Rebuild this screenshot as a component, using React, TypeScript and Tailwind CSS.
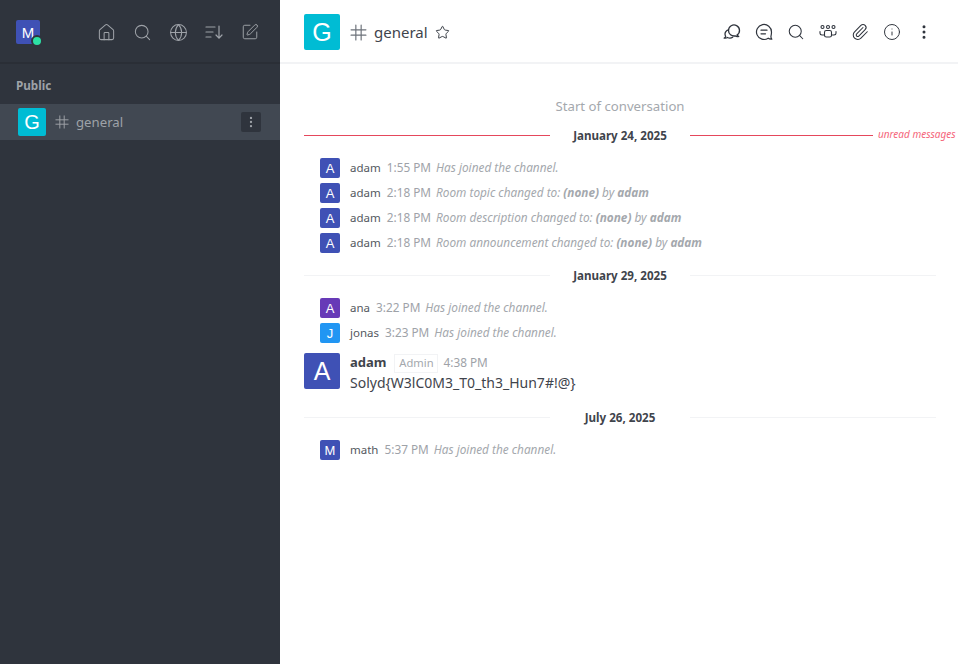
import { ReactNode } from "react"
import { EllipsisVertical, Globe, House, Info, Paperclip, Search, SquarePen, Star } from "lucide-react"

const font = "font-['Noto_Sans',sans-serif]"

function Avatar({ letter, color, size }: { letter: string; color: string; size: "sm" | "xs" | "md" | "lg" }) {
  const sizes = {
    sm: "w-5 h-5 text-[13px] rounded-[2px]",
    xs: "w-6 h-6 text-[15px] rounded-[2px]",
    md: "w-7 h-7 text-[20px] rounded-[2px]",
    lg: "w-9 h-9 text-[25px] rounded-[2px]",
  }
  return (
    <div className={`${sizes[size]} ${color} flex items-center justify-center text-white shrink-0 leading-none font-['Liberation_Sans',sans-serif]`}>
      {letter}
    </div>
  )
}

function HashIcon({ size, className }: { size: number; className?: string }) {
  return (
    <svg width={size} height={size} viewBox="0 0 16 16" fill="none" stroke="currentColor" strokeWidth="1.1" strokeLinecap="round" className={className}>
      <path d="M5.500 1v14M10.500 1v14M1 5.500h14M1 10.500h14" />
    </svg>
  )
}

function SortIcon() {
  return (
    <svg width="20" height="20" viewBox="0 0 20 20" fill="none" stroke="currentColor" strokeWidth="1.2" strokeLinecap="round">
      <path d="M2 5h9M2 10h7M2 15h5M15 4v12M12 13l3 3.200 3-3.200" />
    </svg>
  )
}

function ThreadIcon() {
  return (
    <svg width="20" height="20" viewBox="0 0 20 20" fill="none" stroke="#2f343d" strokeWidth="1.300" strokeLinejoin="round" strokeLinecap="round">
      <path d="M6.500 8.500a5.500 5.500 0 1 1 8.500 4.600c.3.800.9 1.100 1.800 1.200-1.300.5-2.600.3-3.600-.4-3.500.6-6.700-1.700-6.700-5.400Z" />
      <path d="M6.400 7.800c-2 .7-3.400 2.400-3.400 4.300 0 .9.300 1.700.7 2.400-.3.700-.8 1.200-1.500 1.600 1.300.2 2.400 0 3.300-.6 1.700.8 3.700.7 5.200-.3" />
    </svg>
  )
}

function DiscussionIcon() {
  return (
    <svg width="20" height="20" viewBox="0 0 20 20" fill="none" stroke="#2f343d" strokeWidth="1.200" strokeLinecap="round" strokeLinejoin="round">
      <path d="M17.500 10a7.500 7.500 0 1 0-3.300 6.200c.9.700 2.100 1 3.600.9-.7-.8-1-1.800-.8-3 .3-1.300.5-2.800.5-4.100Z" />
      <path d="M7 8.200h6M7 11.800h4.500" />
    </svg>
  )
}

function TeamIcon() {
  return (
    <svg width="20" height="20" viewBox="0 0 20 20" fill="none" stroke="#2f343d" strokeWidth="1.100" strokeLinecap="round" strokeLinejoin="round">
      <circle cx="4.500" cy="5" r="1.500" />
      <circle cx="10" cy="5" r="1.500" />
      <circle cx="15.500" cy="5" r="1.500" />
      <rect x="6.500" y="8.500" width="7" height="6.500" rx="1.800" />
      <path d="M6.500 13H4c-1 0-2-.5-2-1.700V9.500M13.500 13H16c1 0 2-.5 2-1.700V9.500" />
    </svg>
  )
}

function ToolButton({ children }: { children: ReactNode }) {
  return <div className="w-5 h-5 flex items-center justify-center text-[#2f343d]">{children}</div>
}

function SideButton({ children }: { children: ReactNode }) {
  return <div className="w-5 h-5 flex items-center justify-center text-[#9ea2a8]">{children}</div>
}

function DateDivider({ label, unread }: { label: string; unread?: boolean }) {
  const line = unread ? "bg-[#e5475c]" : "bg-[#f2f3f5]"
  return (
    <div className="relative flex items-center h-[19px]">
      <div className={`h-px w-[246px] ${line}`} />
      <div className="w-[140px] text-center text-[11.6px] font-bold text-[#3f444c]">{label}</div>
      <div className={`h-px flex-1 ${line} ${unread ? "mr-[63px]" : ""}`} />
      {unread && (
        <span className="absolute left-[574px] top-[1px] text-[10px] italic text-[#f5657a] whitespace-nowrap">
          unread messages
        </span>
      )}
    </div>
  )
}

function SystemRow({ name, time, color, letter, children }: { name: string; time: string; color?: string; letter?: string; children: ReactNode }) {
  return (
    <div className="flex items-center h-5 pl-4 mb-[5px] whitespace-nowrap">
      <Avatar letter={letter ?? "A"} color={color ?? "bg-[#3f51b5]"} size="sm" />
      <span className="ml-[10px] text-[11.5px] text-[#54585e]">{name}</span>
      <span className="ml-[6px] text-[11.8px] text-[#9ea2a8]">{time}</span>
      <span className="ml-[5px] text-[11.8px] italic text-[#a4a8ad]">{children}</span>
    </div>
  )
}

export default function App() {
  return (
    <div className={`flex w-[958px] h-[664px] overflow-hidden bg-white ${font}`}>
      <aside className="w-[280px] shrink-0 bg-[#2f343d] flex flex-col">
        <div className="h-[64px] flex items-center justify-between pl-4 pr-[20px] pt-[2px] border-b-2 border-[#2a2e36]">
          <div className="relative">
            <Avatar letter="M" color="bg-[#3f51b5]" size="xs" />
            <div className="absolute left-[15px] top-[15px] w-[12px] h-[12px] rounded-full bg-[#2de0a5] border-2 border-[#2f343d]" />
          </div>
          <div className="flex items-center gap-4">
            <SideButton><House size={19} strokeWidth={1.3} /></SideButton>
            <SideButton><Search size={19} strokeWidth={1.3} /></SideButton>
            <SideButton><Globe size={19} strokeWidth={1.3} /></SideButton>
            <SideButton><SortIcon /></SideButton>
            <SideButton><SquarePen size={18} strokeWidth={1.3} /></SideButton>
          </div>
        </div>
        <div className="h-10 flex items-center px-4 pt-1 text-[11.7px] font-bold text-[#9ea2a8]">Public</div>
        <div className="h-9 flex items-center pl-[18px] pr-[19px] bg-[#414852]">
          <Avatar letter="G" color="bg-[#00bcd4]" size="md" />
          <HashIcon size={14} className="ml-[9px] text-[#9ea2a8]" />
          <span className="ml-[7px] pt-px text-[13.2px] text-[#9ea2a8]">general</span>
          <div className="ml-auto w-5 h-5 rounded-[2px] bg-[#2f343d] flex items-center justify-center text-[#9ea2a8]">
            <EllipsisVertical size={14} />
          </div>
        </div>
      </aside>

      <main className="flex-1 flex flex-col min-w-0">
        <header className="h-[64px] flex items-center pl-6 pr-6 pt-[2px] border-b-2 border-[#f2f3f5]">
          <Avatar letter="G" color="bg-[#00bcd4]" size="lg" />
          <HashIcon size={17} className="ml-[10px] text-[#6c727a]" />
          <span className="ml-[7px] text-[15px] text-[#3f444c]">general</span>
          <Star size={15} strokeWidth={1.5} className="ml-[7px] text-[#2f343d]" />
          <div className="ml-auto flex items-center gap-3">
            <ToolButton><ThreadIcon /></ToolButton>
            <ToolButton><DiscussionIcon /></ToolButton>
            <ToolButton><Search size={18} strokeWidth={1.4} /></ToolButton>
            <ToolButton><TeamIcon /></ToolButton>
            <ToolButton><Paperclip size={18} strokeWidth={1.4} /></ToolButton>
            <ToolButton><Info size={18} strokeWidth={1.3} /></ToolButton>
            <ToolButton><EllipsisVertical size={18} strokeWidth={2} /></ToolButton>
          </div>
        </header>

        <div className="flex-1 pl-6 pr-[22px]">
          <div className="h-[20px] mt-[32px] text-center text-[13.2px] text-[#a4a8ad] leading-5">Start of conversation</div>
          <div className="mt-[10px]">
            <DateDivider label="January 24, 2025" unread />
          </div>
          <div className="mt-[13px]">
            <SystemRow name="adam" time="1:55 PM">Has joined the channel.</SystemRow>
            <SystemRow name="adam" time="2:18 PM">Room topic changed to: <b>(none)</b> by <b>adam</b></SystemRow>
            <SystemRow name="adam" time="2:18 PM">Room description changed to: <b>(none)</b> by <b>adam</b></SystemRow>
            <SystemRow name="adam" time="2:18 PM">Room announcement changed to: <b>(none)</b> by <b>adam</b></SystemRow>
          </div>
          <div className="mt-[13px]">
            <DateDivider label="January 29, 2025" />
          </div>
          <div className="mt-[13px]">
            <SystemRow name="ana" time="3:22 PM" color="bg-[#673ab7]">Has joined the channel.</SystemRow>
            <SystemRow name="jonas" time="3:23 PM" color="bg-[#2196f3]" letter="J">Has joined the channel.</SystemRow>
          </div>
          <div className="flex mt-[10px]">
            <Avatar letter="A" color="bg-[#3f51b5]" size="lg" />
            <div className="ml-[10px]">
              <div className="flex items-center h-5">
                <span className="text-[13px] font-bold text-[#3f444c]">adam</span>
                <span className="ml-[8px] h-[19px] w-[44px] text-center border border-[#f2f3f5] text-[11.2px] leading-[15px] text-[#a4a8ad]">Admin</span>
                <span className="ml-[5px] text-[11.8px] text-[#9ea2a8]">4:38 PM</span>
              </div>
              <div className="text-[14px] leading-5 text-[#3f444c]">{"Solyd{W3lC0M3_T0_th3_Hun7#!@}"}</div>
            </div>
          </div>
          <div className="mt-[15px]">
            <DateDivider label="July 26, 2025" />
          </div>
          <div className="mt-[13px]">
            <SystemRow name="math" time="5:37 PM" letter="M">Has joined the channel.</SystemRow>
          </div>
        </div>
      </main>
    </div>
  )
}
